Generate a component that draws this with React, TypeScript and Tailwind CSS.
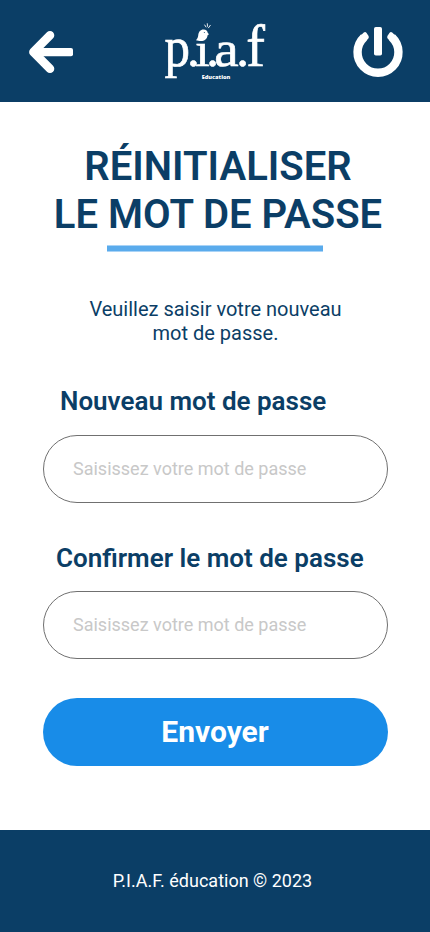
function BackIcon() {
  return (
    <svg width="46" height="46" viewBox="0 0 46 46" fill="none" stroke="#fff" aria-hidden="true">
      <path d="M22 6.200 5.400 23 22 39.800" strokeWidth="8.600" strokeLinecap="round" strokeLinejoin="round" />
      <path d="M6 19H43a2 2 0 0 1 2 2v4.300a2 2 0 0 1-2 2H6z" fill="#fff" stroke="none" />
    </svg>
  );
}

function PowerIcon() {
  return (
    <svg width="50" height="52" viewBox="0 0 50 52" fill="none" aria-hidden="true">
      <path d="M11 10.400A20.450 20.450 0 1 0 39 10.400" stroke="#fff" strokeWidth="8.400" />
      <path d="M7.400 8.700 10.800 5.600Q12.200 4.500 13.400 5.800L15.600 9Q16.200 10.600 15.200 11.700L13.200 13.800 10 14z M42.600 8.700 39.200 5.600Q37.800 4.500 36.600 5.800L34.400 9Q33.800 10.600 34.800 11.700L36.800 13.800 40 14z" fill="#fff" />
      <rect x="21" y="0" width="8" height="28.500" rx="1.800" fill="#fff" />
    </svg>
  );
}

function Logo() {
  return (
    <svg width="120" height="74" viewBox="155 11 120 74" fill="#fff" role="img" aria-label="p.i.a.f Éducation">
      <g fontFamily="'Liberation Serif', serif" fontSize="51" stroke="#fff" strokeWidth=".6">
        <text transform="translate(163.500 65.500) scale(1 1.100)">p</text>
        <text y="65.500" x="186">.</text>
        <text transform="translate(194 65.500) scale(1.050 .97)">ı</text>
        <text y="65.500" x="205.300">.</text>
        <text transform="translate(213.300 65.500) scale(1.080 1)">a</text>
        <text y="65.500" x="235.300">.</text>
        <text transform="translate(245.300 65.500) scale(1.100 1.150)">f</text>
      </g>
      <path d="M195 40.300C196 39 197 37.500 197.200 35.500C197.500 31.800 199.500 29.500 202.500 29.500C205.200 29.500 206.500 31 206.700 32.800L208 34.200L206.600 35.200C206.200 38.800 203.500 41 200 41C198 41 196.500 40.900 195 40.300Z" />
      <path d="M203.700 25 205 27M206.300 23.700 206.500 26.300M209.300 25.300 207.500 27.800" fill="none" stroke="#fff" strokeWidth=".9" strokeLinecap="round" />
      <circle cx="203.300" cy="32.500" r=".5" fill="#0b3e66" />
      <text x="200.700" y="78.500" fontFamily="'Open Sans', sans-serif" fontSize="5.600" fontWeight="800">Education</text>
    </svg>
  );
}

function Field({ id }: { id: string }) {
  return (
    <input
      id={id}
      type="password"
      placeholder="Saisissez votre mot de passe"
      className="block h-[68px] w-full rounded-full border border-[#707070] bg-white px-[29px] pb-0.5 text-[18px] outline-none placeholder:text-[#c8c8c8] placeholder:opacity-100"
    />
  );
}

export default function App() {
  return (
    <div className="flex min-h-[932px] flex-col bg-white font-['Roboto',sans-serif] text-[#0b3e66]">
      <header className="flex h-[102px] items-start justify-between bg-[#0b3e66] pl-7 pr-[27px]">
        <button type="button" aria-label="Retour" className="mt-[29px]"><BackIcon /></button>
        <div className="mt-[11px] ml-1"><Logo /></div>
        <button type="button" aria-label="Déconnexion" className="mt-[27px]"><PowerIcon /></button>
      </header>
      <main className="flex flex-1 flex-col pl-[43px] pr-[42px]">
        <h1 className="mt-[41px] ml-[5px] self-center whitespace-nowrap text-center text-[40px] leading-[48px] font-semibold">
          RÉINITIALISER<br />LE MOT DE PASSE
        </h1>
        <div className="mt-1.5 mr-px h-[7px] w-[216px] self-center border-y border-[#a9d3f6] bg-[#5aabec]" />
        <p className="mt-[45px] text-center text-[20px] leading-6">
          Veuillez saisir votre nouveau<br />mot de passe.
        </p>
        <label htmlFor="password" className="mt-[41px] ml-[17px] text-[26px] leading-[30px] font-semibold">Nouveau mot de passe</label>
        <div className="mt-[19px]"><Field id="password" /></div>
        <label htmlFor="confirmation" className="mt-10 ml-[13px] text-[26px] leading-[30px] font-semibold">Confirmer le mot de passe</label>
        <div className="mt-[18px]"><Field id="confirmation" /></div>
        <button type="button" className="mt-[39px] h-[68px] w-full rounded-full bg-[#188ce8] pr-px pb-0.5 text-[30px] font-bold text-white">Envoyer</button>
      </main>
      <footer className="flex h-[102px] items-center justify-center bg-[#0b3e66] pr-[5px] pb-0.5 text-[18px] text-white">
        P.I.A.F. éducation © 2023
      </footer>
    </div>
  );
}
